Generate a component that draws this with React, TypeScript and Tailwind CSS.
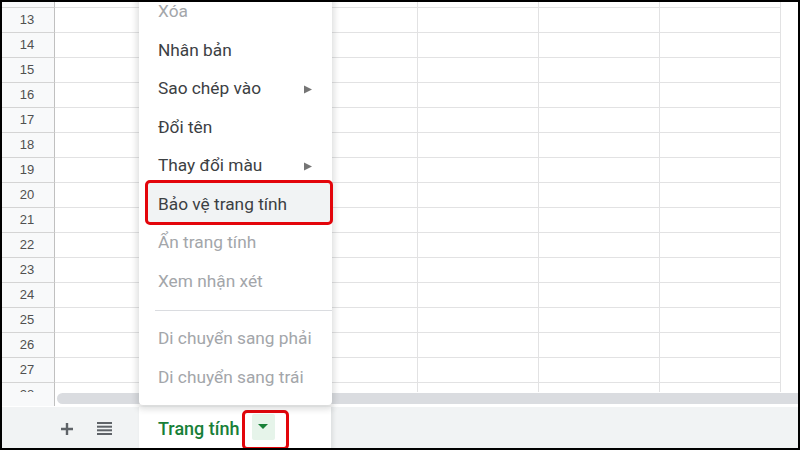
import React from 'react';

const rows = [12, 13, 14, 15, 16, 17, 18, 19, 20, 21, 22, 23, 24, 25, 26, 27, 28];
const cols = 6;

type Item = { label: string; disabled?: boolean; submenu?: boolean; marked?: boolean; divider?: boolean };

const menuItems: Item[] = [
  { label: 'Xóa', disabled: true },
  { label: 'Nhân bản' },
  { label: 'Sao chép vào', submenu: true },
  { label: 'Đổi tên' },
  { label: 'Thay đổi màu', submenu: true },
  { label: 'Bảo vệ trang tính', marked: true },
  { label: 'Ẩn trang tính', disabled: true },
  { label: 'Xem nhận xét', disabled: true },
  { label: '', divider: true },
  { label: 'Di chuyển sang phải', disabled: true },
  { label: 'Di chuyển sang trái', disabled: true },
];

function SubArrow() {
  return (
    <svg width="10" height="9" viewBox="0 0 10 9" className="absolute left-[164px]">
      <path d="M1 0.5 L9 4.5 L1 8.5 Z" fill="#757575" />
    </svg>
  );
}

function SheetMenu() {
  return (
    <div className="absolute left-[139px] bottom-[45px] w-[193px] bg-white rounded-b-[4px] pb-[8px] shadow-[0_2px_6px_2px_rgba(60,64,67,0.18)] flex flex-col">
      {menuItems.map((item, i) =>
        item.divider ? (
          <div key={i} className="h-[19.25px] flex items-center pl-[16px]">
            <div className="h-px w-full bg-[#dadce0]" />
          </div>
        ) : (
          <div
            key={i}
            className={`relative h-[38.5px] flex items-center pl-[19px] text-[17.3px] ${
              item.disabled ? 'text-[#a3a6aa]' : 'text-[#3c4043]'
            }`}
          >
            {item.marked && (
              <div className="absolute left-[6px] right-[-1px] top-[-5px] bottom-[-1px] rounded-[5px] border-[3px] border-[#e3050b] bg-[#f1f3f4]" />
            )}
            <span className="relative">{item.label}</span>
            {item.submenu && <SubArrow />}
          </div>
        )
      )}
    </div>
  );
}

export default function App() {
  return (
    <div
      className="relative w-[800px] h-[450px] overflow-hidden bg-white flex flex-col"
      style={{ fontFamily: 'Roboto, "Noto Sans", "Liberation Sans", sans-serif' }}
    >
      {/* cell grid */}
      <div className="h-[392px] overflow-hidden">
        <div className="-mt-[17px] flex flex-col">
          {rows.map((r) => (
            <div key={r} className="flex h-[25px] shrink-0">
              <div className="w-[55px] shrink-0 bg-[#f8f9fa] border-r border-b border-r-[#c0c0c0] border-b-[#d4d4d4] flex items-center justify-center text-[13px] text-[#505050] font-['Liberation_Sans',Arial,sans-serif]">
                {r}
              </div>
              {Array.from({ length: cols }).map((_, c) => (
                <div key={c} className="w-[121px] shrink-0 border-r border-b border-[#e2e2e3]" />
              ))}
            </div>
          ))}
        </div>
      </div>

      {/* horizontal scrollbar */}
      <div className="h-[14px] flex">
        <div className="w-[55px] shrink-0 bg-[#f8f9fa] border-r border-[#c0c0c0]" />
        <div className="flex-1 pl-[2px] pt-[1px]">
          <div className="h-[11px] bg-[#dadce0] rounded-l-full" />
        </div>
      </div>

      {/* sheet tabs bar */}
      <div className="flex-1 bg-[#f1f3f4] border-t border-white flex items-stretch">
        <div className="w-[139px] shrink-0 flex items-center">
          <svg width="14" height="14" viewBox="0 0 14 14" className="ml-[60px]">
            <path d="M7 1 V13 M1 7 H13" stroke="#5f6368" strokeWidth="2.4" />
          </svg>
          <svg width="15" height="13" viewBox="0 0 15 13" className="ml-[23px]">
            <rect x="0" y="0" width="15" height="2" fill="#5f6368" />
            <rect x="0" y="3.7" width="15" height="2" fill="#5f6368" />
            <rect x="0" y="7.3" width="15" height="2" fill="#5f6368" />
            <rect x="0" y="11" width="15" height="2" fill="#5f6368" />
          </svg>
        </div>
        <div className="w-[192px] bg-white shadow-[2px_0_4px_rgba(60,64,67,0.12)] flex items-center pl-[19px]">
          <span className="text-[18px] font-medium text-[#188038]">Trang tính</span>
          <div className="relative ml-[12px] -mt-[4px]">
            <div className="w-[23px] h-[26px] bg-[#e6f4ea] rounded-[2px] flex items-center justify-center">
              <svg width="10" height="5" viewBox="0 0 10 5">
                <path d="M0 0 H10 L5 5 Z" fill="#188038" />
              </svg>
            </div>
            <div className="absolute left-[-10px] top-[-4px] w-[47px] h-[40px] rounded-[5px] border-[3px] border-[#e3050b]" />
          </div>
        </div>
      </div>

      <SheetMenu />

      {/* screenshot frame */}
      <div className="absolute inset-0 border-2 border-black pointer-events-none" />
    </div>
  );
}
